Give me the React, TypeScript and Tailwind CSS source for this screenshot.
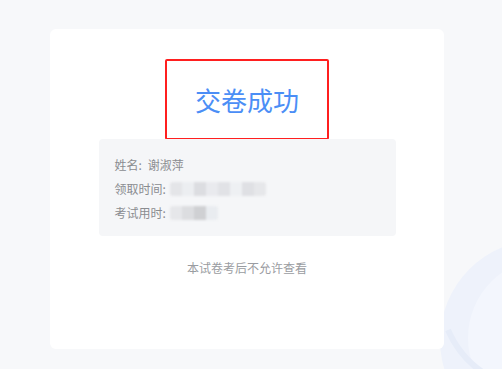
const MASK_ROW_A = ["#e4e5e8", "#eceef1", "#dcdde1", "#e9eaee", "#e1e2e6", "#eef0f3", "#dfe0e4", "#e6e7ea"];
const MASK_ROW_B = ["#e6e7ea", "#dcdde0", "#cfd0d3", "#e9ecf0"];

function Masked({ tones }: { tones: string[] }) {
  return (
    <span className="ml-[4px] inline-flex h-[14px] overflow-hidden rounded-[3px] blur-[1px]">
      {tones.map((c, i) => (
        <span key={i} className="h-full w-[12px]" style={{ background: c }} />
      ))}
    </span>
  );
}

export default function App() {
  return (
    <div className="relative h-[369px] w-[502px] overflow-hidden bg-[#f7f8fa] font-['Noto_Sans_CJK_SC','Noto_Sans',sans-serif]">
      {/* decorative ring, bottom right */}
      <svg className="absolute left-[430px] top-[230px]" width="140" height="150" viewBox="0 0 140 150">
        <circle cx="110" cy="110" r="100" fill="#eef2fb" />
        <circle cx="118" cy="108" r="80" fill="#f3f6fd" />
        <path d="M18 100 Q40 150 100 160" stroke="#e6ecf8" strokeWidth="6" fill="none" />
      </svg>

      <div className="relative ml-[50px] mt-[29px] flex h-[320px] w-[394px] flex-col items-center rounded-[6px] bg-white pt-[30px]">
        <div className="flex h-[81px] w-[164px] items-center justify-center rounded-[2px] border-2 border-[#ff1f1f]">
          <span className="text-[26px] leading-none text-[#4b8ef6]">交卷成功</span>
        </div>

        <div className="mt-[-1px] w-[297px] rounded-[4px] bg-[#f5f6f8] pb-[11px] pl-[16px] pt-[14px] text-[12px] leading-[24px] text-[#8a8c90]">
          <div className="flex items-center">
            <span>姓名:</span>
            <span className="ml-[6px]">谢淑萍</span>
          </div>
          <div className="flex items-center">
            <span>领取时间:</span>
            <Masked tones={MASK_ROW_A} />
          </div>
          <div className="flex items-center">
            <span>考试用时:</span>
            <Masked tones={MASK_ROW_B} />
          </div>
        </div>

        <div className="mt-[20px] text-[12px] leading-[24px] text-[#9a9ca1]">本试卷考后不允许查看</div>
      </div>
    </div>
  );
}
